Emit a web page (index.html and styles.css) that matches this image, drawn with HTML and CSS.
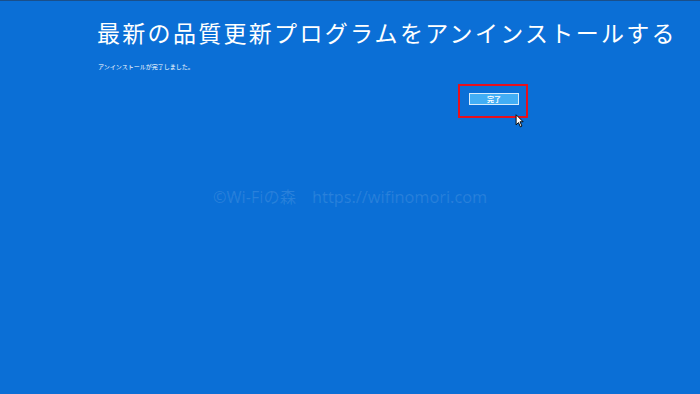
FILE: index.html
```html
<!DOCTYPE html>
<html lang="ja">
<head>
<meta charset="utf-8">
<link rel="stylesheet" href="styles.css">
</head>
<body>
<div class="screen">
  <h1 class="title">最新の品質更新プログラムをアンインストールする</h1>
  <p class="msg">アンインストールが完了しました。</p>
  <div class="actions">
    <div class="highlight">
      <button class="done">完了</button>
    </div>
    <svg class="cursor" width="10" height="14" viewBox="0 0 12 18"><path d="M1 1 L1 14 L4 11 L6.5 16.5 L8.5 15.5 L6 10 L10 10 Z" fill="#fff" stroke="#000" stroke-width="1.2" stroke-linejoin="round"/></svg>
  </div>
  <div class="watermark">©Wi-Fiの森　https://wifinomori.com</div>
</div>
</body>
</html>
```
FILE: styles.css
```css
html, body {
  margin: 0;
  padding: 0;
}
body {
  width: 700px;
  height: 394px;
  overflow: hidden;
  background: #0b6fd6;
  font-family: "Noto Sans CJK JP", "Noto Sans", sans-serif;
}
.screen {
  position: relative;
  width: 700px;
  height: 394px;
  box-sizing: border-box;
  border-top: 1px solid #1a4f8a;
  padding: 13px 0 0 97px;
}
.title {
  margin: 0;
  font-size: 23px;
  font-weight: 400;
  color: #fff;
  line-height: 36px;
  white-space: nowrap;
  letter-spacing: 2.3px;
}
.msg {
  margin: 12px 0 0 1px;
  font-size: 6px;
  color: #fff;
  line-height: 10px;
}
.actions {
  position: relative;
  margin: 12px 0 0 361px;
  width: 80px;
}
.highlight {
  width: 66px;
  height: 30px;
  border: 2px solid #e8101c;
  display: flex;
  align-items: center;
  justify-content: center;
}
.done {
  width: 50px;
  height: 12px;
  padding: 0;
  margin: 0 0 4px 2px;
  background: #42aef5;
  border: 1px solid #d8ecfb;
  color: #fff;
  font-family: "Noto Sans CJK JP", sans-serif;
  font-size: 7px;
  font-weight: 700;
  line-height: 10px;
}
.cursor {
  position: absolute;
  left: 57px;
  top: 30px;
}
.watermark {
  position: absolute;
  left: 213px;
  top: 183px;
  font-family: "Noto Sans", "Noto Sans CJK JP", sans-serif;
  font-size: 16.2px;
  color: rgba(255, 255, 255, 0.12);
  white-space: nowrap;
}
```
